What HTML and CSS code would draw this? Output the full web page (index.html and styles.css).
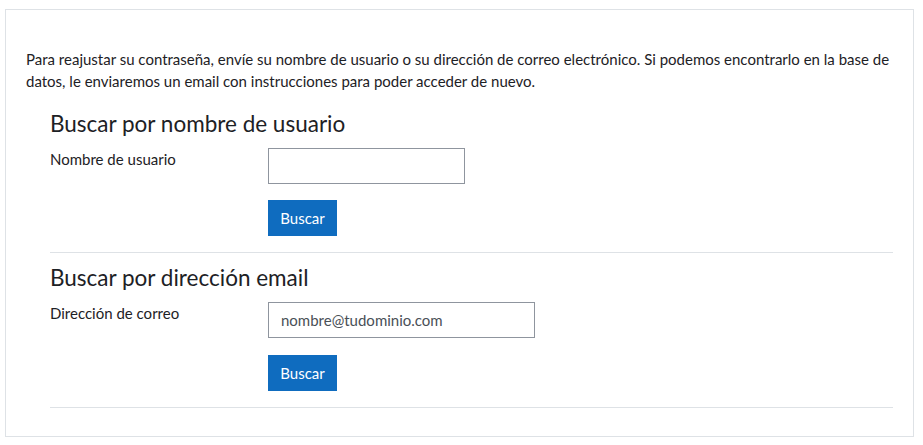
FILE: index.html
```html
<!DOCTYPE html>
<html lang="es">
<head>
  <meta charset="UTF-8" />
  <title>Olvidó su contraseña</title>
  <link rel="stylesheet" href="styles.css">
</head>
<body>
  <div class="card">
    <p class="intro">Para reajustar su contraseña, envíe su nombre de usuario o su dirección de correo electrónico. Si podemos encontrarlo en la base de datos, le enviaremos un email con instrucciones para poder acceder de nuevo.</p>

    <form class="search-form">
      <h3>Buscar por nombre de usuario</h3>
      <div class="form-row">
        <label for="username">Nombre de usuario</label>
        <input type="text" id="username" class="input input-short">
      </div>
      <div class="form-row actions">
        <span></span>
        <button type="button" class="btn">Buscar</button>
      </div>
    </form>

    <form class="search-form">
      <h3>Buscar por dirección email</h3>
      <div class="form-row">
        <label for="email">Dirección de correo</label>
        <input type="text" id="email" class="input input-long" value="nombre@tudominio.com">
      </div>
      <div class="form-row actions">
        <span></span>
        <button type="button" class="btn">Buscar</button>
      </div>
    </form>
  </div>
</body>
</html>
```

FILE: styles.css
```css
body {
  margin: 9px 9px 0 5px;
  font-family: 'Lato', 'Liberation Sans', sans-serif;
  font-size: 15px;
  color: #1d2125;
  background: #fff;
}

.card {
  border: 1px solid #dee2e6;
  padding: 38px 20px 28px 20px;
}

.intro {
  margin: 0 0 18px 0;
  line-height: 22px;
}

.search-form {
  margin-left: 24px;
  border-bottom: 1px solid #dee2e6;
  padding-bottom: 16px;
}

.search-form + .search-form {
  padding-top: 11px;
}

.search-form h3 {
  margin: 0 0 11px 0;
  font-size: 22.5px;
  font-weight: normal;
  line-height: 27px;
}

.form-row {
  display: grid;
  grid-template-columns: 218px 1fr;
  align-items: start;
}

.form-row label {
  line-height: 22px;
}

.form-row.actions {
  margin-top: 16px;
}

.search-form + .search-form .form-row.actions {
  margin-top: 17px;
}

.input {
  box-sizing: border-box;
  height: 36px;
  padding: 6px 12px;
  border: 1px solid #8f959e;
  border-radius: 0;
  font-family: inherit;
  font-size: 15px;
  color: #495057;
}

.input-short {
  width: 197px;
}

.input-long {
  width: 267px;
}

.btn {
  justify-self: start;
  width: 69px;
  height: 36px;
  padding: 0;
  border: none;
  background: #0f6cbf;
  color: #fff;
  font-family: inherit;
  font-size: 15px;
  cursor: pointer;
}
```
